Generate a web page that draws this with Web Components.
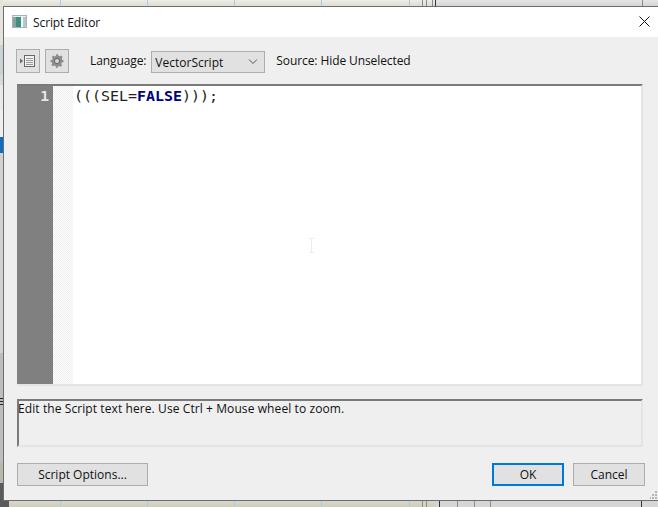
<!DOCTYPE html>
<html>
<head>
<meta charset="utf-8">
<title>Script Editor</title>
<style>
  html, body { margin: 0; padding: 0; height: 100%; overflow: hidden; }
</style>
</head>
<body>
<se-desktop>
  <se-dialog heading="Script Editor">
    <se-toolbar>
      <se-icon-button kind="list"></se-icon-button>
      <se-icon-button kind="gear"></se-icon-button>
      <span slot="label">Language:</span>
      <se-select slot="select">VectorScript</se-select>
      <span slot="source">Source: Hide Unselected</span>
    </se-toolbar>
    <se-editor></se-editor>
    <se-help>Edit the Script text here. Use Ctrl + Mouse wheel to zoom.</se-help>
    <se-footer>
      <se-button wide>Script Options...</se-button>
      <se-button slot="end" primary>OK</se-button>
      <se-button slot="end">Cancel</se-button>
    </se-footer>
  </se-dialog>
</se-desktop>

<script>
// small helper, every element is just a template + shadow root
function make(name, html, extra) {
  const template = document.createElement("template");
  template.innerHTML = html;
  class El extends HTMLElement {
    constructor() {
      super();
      this.attachShadow({ mode: "open" }).appendChild(template.content.cloneNode(true));
      if (extra) extra(this);
    }
  }
  customElements.define(name, El);
}

make("se-desktop", `
  <style>
    :host { display: block; position: relative; width: 658px; height: 507px; overflow: hidden;
            background: #d9d7ca; font: 12px "Open Sans", "Noto Sans", sans-serif; color: #111; }
    .top { position: absolute; left: 0; top: 0; width: 658px; height: 6px; background: linear-gradient(#eeede6, #dfddd2); }
    .top-right { position: absolute; left: 436px; top: 0; width: 222px; height: 6px; background: linear-gradient(#e6e6e6, #d4d4d4); }
    .bottom { position: absolute; left: 0; top: 501px; width: 658px; height: 6px; background: linear-gradient(#d8d7ca, #cfcdbf); }
    .bottom-right { position: absolute; left: 436px; top: 501px; width: 222px; height: 6px; background: #d6d6d6; }
    .v { position: absolute; width: 1px; height: 6px; background: #a9cbe6; }
    .g { background: #8a8a8a; }
    .d { background: #333; }
    .left { position: absolute; left: 0; width: 3px; }
  </style>
  <div class="top"></div><div class="top-right"></div>
  <div class="bottom"></div><div class="bottom-right"></div>
  <i class="v" style="left:60px;top:0"></i><i class="v" style="left:147px;top:0"></i>
  <i class="v" style="left:234px;top:0"></i><i class="v" style="left:321px;top:0"></i>
  <i class="v" style="left:409px;top:0"></i>
  <i class="v g" style="left:422px;top:0"></i><i class="v g" style="left:426px;top:0"></i>
  <i class="v g" style="left:432px;top:0"></i><i class="v d" style="left:435px;top:0"></i>
  <i class="v g" style="left:642px;top:0"></i>
  <i class="v" style="left:60px;top:501px"></i><i class="v" style="left:147px;top:501px"></i>
  <i class="v" style="left:234px;top:501px"></i><i class="v" style="left:321px;top:501px"></i>
  <i class="v" style="left:409px;top:501px"></i>
  <i class="v g" style="left:422px;top:501px"></i><i class="v g" style="left:426px;top:501px"></i>
  <i class="v d" style="left:439px;top:501px"></i><i class="v g" style="left:457px;top:501px"></i>
  <i class="v g" style="left:474px;top:501px"></i><i class="v g" style="left:490px;top:501px"></i>
  <i class="v d" style="left:641px;top:501px"></i>

  <div class="left" style="top:0;height:45px;background:#e6e4da"></div>
  <div class="left" style="top:45px;height:30px;background:#c9d3d6"></div>
  <div class="left" style="top:75px;height:10px;background:#d9d9d9"></div>
  <div class="left" style="top:85px;height:25px;background:#e9e9e9"></div>
  <div class="left" style="top:110px;height:27px;background:#efefef"></div>
  <div class="left" style="top:137px;height:16px;background:#0a6fc2"></div>
  <div class="left" style="top:153px;height:200px;background:#d2d2d2"></div>
  <div class="left" style="top:353px;height:110px;background:#bdbdbd"></div>
  <div class="left" style="top:398px;height:1px;background:#222"></div>
  <div class="left" style="top:401px;height:1px;background:#222"></div>
  <div class="left" style="top:404px;height:1px;background:#222"></div>
  <div class="left" style="top:463px;height:20px;background:#b9b8a8"></div>
  <div class="left" style="top:483px;height:24px;width:9px;background:#5a5a5a"></div>
  <slot></slot>
`);

make("se-dialog", `
  <style>
    /* a window on the desktop, so it gets its place directly */
    :host { position: absolute; left: 3px; top: 6px; width: 655px; height: 495px; box-sizing: border-box;
            display: flex; flex-direction: column; background: #efefef;
            border-top: 1px solid #6e6e6e; border-left: 1px solid #6e6e6e; border-bottom: 1px solid #6e6e6e; }
    .title { height: 30px; flex: none; background: #fff; display: flex; align-items: center; padding-left: 8px; }
    .title span { margin-left: 5px; font-size: 12px; letter-spacing: -0.1px; color: #111; flex: 1; }
    .title svg { display: block; }
    .close { width: 11px; height: 11px; margin-right: 8px; margin-bottom: 2px; }
    .body { flex: 1; display: flex; flex-direction: column; padding: 12px 13px 0 12px; }
    .grip { position: absolute; right: 0; bottom: 1px; }
  </style>
  <div class="title">
    <svg width="16" height="16" viewBox="0 0 16 16">
      <rect x="0.5" y="1.5" width="14" height="12" fill="#e8eef0" stroke="#a9b2b8"/>
      <rect x="1" y="3" width="3" height="10" fill="#7fa5a8"/>
      <rect x="4" y="3" width="5" height="10" fill="#3f8f80"/>
      <rect x="9" y="3" width="2" height="10" fill="#f4f7f7"/>
      <rect x="11" y="3" width="3" height="10" fill="#b9c6cc"/>
    </svg>
    <span id="heading"></span>
    <svg class="close" viewBox="0 0 11 11"><path d="M0.5 0.5L10.5 10.5M10.5 0.5L0.5 10.5" stroke="#111" stroke-width="1" fill="none"/></svg>
  </div>
  <div class="body"><slot></slot></div>
  <svg class="grip" width="8" height="8" viewBox="0 0 8 8" fill="#b4b4b4">
    <rect x="5" y="0" width="2" height="2"/><rect x="2" y="3" width="2" height="2"/><rect x="5" y="3" width="2" height="2"/>
    <rect x="-1" y="6" width="2" height="2"/><rect x="2" y="6" width="2" height="2"/><rect x="5" y="6" width="2" height="2"/>
  </svg>
`, el => {
  el.shadowRoot.getElementById("heading").textContent = el.getAttribute("heading");
});

make("se-toolbar", `
  <style>
    :host { display: flex; align-items: flex-start; height: 35px; flex: none; }
    .icons { display: flex; gap: 5px; }
    .label { margin-left: 21px; margin-top: 3px; letter-spacing: -0.1px; }
    .select { display: block; margin-left: 5px; margin-top: 2px; }
    .source { margin-left: 11px; margin-top: 3px; letter-spacing: -0.09px; }
  </style>
  <div class="icons"><slot></slot></div>
  <div class="label"><slot name="label"></slot></div>
  <div class="select"><slot name="select"></slot></div>
  <div class="source"><slot name="source"></slot></div>
`);

make("se-icon-button", `
  <style>
    :host { display: flex; width: 24px; height: 24px; box-sizing: border-box; align-items: center; justify-content: center;
            background: #e1e1e1; border: 1px solid #adadad; }
    svg { display: block; }
    .hide { display: none; }
  </style>
  <svg id="list" width="16" height="16" viewBox="0 0 16 16">
    <path d="M0 5.500L3 8L0 10.500Z" fill="#666"/>
    <rect x="4.500" y="2.500" width="10" height="11" fill="#f2f2f2" stroke="#666"/>
    <path d="M6 5.500H13M6 7.500H13M6 9.500H13M6 11.500H13" stroke="#999" stroke-width="1"/>
  </svg>
  <svg id="gear" width="16" height="16" viewBox="0 0 16 16">
    <path d="M7 2h2l.4 1.600 1.300.5L12.200 3.300l1.400 1.400-.8 1.500.5 1.300L14.500 8v2l-1.700.4-.5 1.300.8 1.500-1.400 1.400-1.500-.8-1.300.5L9 15.500H7l-.4-1.700-1.300-.5-1.500.8-1.400-1.400.8-1.500-.5-1.300L1.500 10V8l1.700-.4.5-1.300-.8-1.500 1.400-1.400 1.500.8 1.300-.5Z" fill="#8d8d8d" transform="translate(0 -.8)"/>
    <circle cx="8" cy="8" r="2.600" fill="#d5d5d5" stroke="#666"/>
  </svg>
`, el => {
  const kind = el.getAttribute("kind");
  el.shadowRoot.getElementById(kind === "list" ? "gear" : "list").setAttribute("class", "hide");
});

make("se-select", `
  <style>
    :host { display: flex; width: 114px; height: 22px; box-sizing: border-box; align-items: center;
            background: #e1e1e1; border: 1px solid #adadad; padding: 0 6px 0 3px; justify-content: space-between; }
    svg { display: block; }
  </style>
  <span><slot></slot></span>
  <svg width="10" height="6" viewBox="0 0 10 6"><path d="M1 0.500L5 4.500L9 0.500" fill="none" stroke="#555"/></svg>
`);

make("se-editor", `
  <style>
    :host { display: flex; height: 302px; flex: none; width: 626px; margin-left: 1px; box-sizing: border-box; background: #fff;
            border-top: 2px solid #7a7a7a; border-bottom: 2px solid #e4e4e4; border-right: 2px solid #e4e4e4; }
    .gutter { width: 36px; background: #808080; color: #e6e6e6; font: bold 14.7px "DejaVu Sans Mono", monospace;
              text-align: right; box-sizing: border-box; padding: 0 4px 0 0; line-height: 20px; }
    .fold { width: 20px; background-color: #fff;
            background-image: conic-gradient(#ececec 25%, #fff 0 50%, #ececec 0 75%, #fff 0);
            background-size: 2px 2px; }
    .code { flex: 1; position: relative; padding-left: 1px; font: 14.95px "DejaVu Sans Mono", monospace; color: #222; line-height: 20px; white-space: pre; }
    b { color: #00007f; font-weight: bold; }
    /* the mouse caret that was caught in the picture */
    .caret { position: absolute; left: 235px; top: 152px; width: 7px; height: 15px; }
  </style>
  <div class="gutter">1</div>
  <div class="fold"></div>
  <div class="code">(((SEL=<b>FALSE</b>)));<svg class="caret" viewBox="0 0 7 15"><path d="M1 .5H6M3.500 .5V14.500M1 14.500H6" stroke="#ececec" fill="none"/></svg></div>
`);

make("se-help", `
  <style>
    :host { display: block; height: 48px; width: 626px; margin-left: 1px; margin-top: 13px; flex: none; box-sizing: border-box; line-height: 16px;
            letter-spacing: 0.09px; text-indent: -1px;
            border-top: 2px solid #7a7a7a; border-left: 2px solid #7a7a7a;
            border-bottom: 2px solid #e4e4e4; border-right: 2px solid #e4e4e4; }
  </style>
  <slot></slot>
`);

make("se-footer", `
  <style>
    :host { display: flex; justify-content: space-between; margin-left: 1px; margin-top: 16px; width: 628px; flex: none; }
    .end { display: flex; gap: 9px; }
  </style>
  <slot></slot>
  <div class="end"><slot name="end"></slot></div>
`);

make("se-button", `
  <style>
    :host { display: flex; width: 72px; height: 23px; box-sizing: border-box; align-items: center; justify-content: center;
            background: #e1e1e1; border: 1px solid #adadad; }
    :host([wide]) { width: 131px; }
    :host([primary]) { border: 2px solid #0078d7; }
  </style>
  <slot></slot>
`);
</script>
</body>
</html>
